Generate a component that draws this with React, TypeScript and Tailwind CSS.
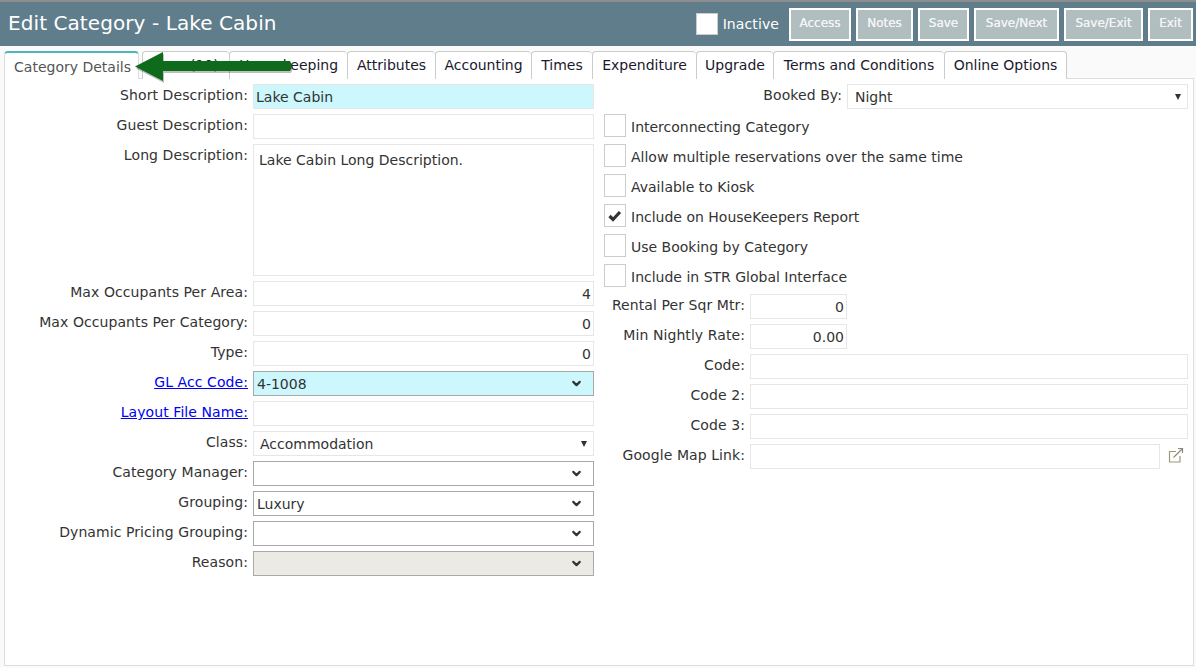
import { ChevronDown } from 'lucide-react';

const tabs = [
  { label: 'Area (10)', width: 'w-[87px]' },
  { label: 'Housekeeping', width: 'w-[118px]' },
  { label: 'Attributes', width: 'w-[88px]' },
  { label: 'Accounting', width: 'w-[96px]' },
  { label: 'Times', width: 'w-[61px]' },
  { label: 'Expenditure', width: 'w-[104px]' },
  { label: 'Upgrade', width: 'w-[77px]' },
  { label: 'Terms and Conditions', width: 'w-[171px]' },
  { label: 'Online Options', width: 'w-[123px]' },
];

const buttons = [
  { label: 'Access', width: 'w-[62px]' },
  { label: 'Notes', width: 'w-[57px]' },
  { label: 'Save', width: 'w-[51px]' },
  { label: 'Save/Next', width: 'w-[85px]' },
  { label: 'Save/Exit', width: 'w-[79px]' },
  { label: 'Exit', width: 'w-[45px]' },
];

const checks = [
  { label: 'Interconnecting Category' },
  { label: 'Allow multiple reservations over the same time' },
  { label: 'Available to Kiosk' },
  { label: 'Include on HouseKeepers Report', checked: true },
  { label: 'Use Booking by Category' },
  { label: 'Include in STR Global Interface' },
];

function Label({ text, link, w = 'w-[243px]' }: { text: string; link?: boolean; w?: string }) {
  return (
    <div className={`${w} shrink-0 text-right h-[22px] leading-[22px] tracking-[0.08px] ${link ? 'text-[#0000ee] underline' : ''}`}>
      {text}
    </div>
  );
}

function Input({ value, right, cyan }: { value?: string; right?: boolean; cyan?: boolean }) {
  return (
    <div
      className={`h-[25px] flex-1 border border-[#e6e6e6] px-[2px] leading-[24px] ${right ? 'text-right' : ''} ${cyan ? 'bg-[#ccf7fd]' : 'bg-white'}`}
    >
      {value}
    </div>
  );
}

function Combo({ value, cyan, disabled }: { value?: string; cyan?: boolean; disabled?: boolean }) {
  return (
    <div
      className={`h-[25px] flex-1 flex items-center justify-between border border-[#a9a9a9] pl-[3px] pr-[10px] ${cyan ? 'bg-[#ccf7fd]' : disabled ? 'bg-[#ebebe4]' : 'bg-white'}`}
    >
      <span className="pt-[1px]">{value}</span>
      <ChevronDown size={13} strokeWidth={4} className="text-[#333]" />
    </div>
  );
}

function NativeSelect({ value, pad = 'pl-[6px]' }: { value: string; pad?: string }) {
  return (
    <div className={`h-[25px] flex-1 flex items-center justify-between border border-[#e6e6e6] bg-white pr-[6px] ${pad}`}>
      <span className="pt-[1px]">{value}</span>
      <svg width="6" height="6" viewBox="0 0 6 6">
        <path d="M0 0H6L3 6Z" fill="#333" />
      </svg>
    </div>
  );
}

function Row({ children }: { children: React.ReactNode }) {
  return <div className="flex gap-[5px] items-start">{children}</div>;
}

export default function App() {
  return (
    <div className="relative w-[1196px] h-[668px] overflow-hidden bg-[#fafafa] text-[14px] text-[#333] font-['Verdana','DejaVu_Sans',sans-serif]">
      <div className="h-[46px] border-t-2 border-[#8e8e8e] bg-[#607d8b] flex items-center pl-[8px] pr-[3px] text-white">
        <h1 className="text-[20px] leading-none tracking-[0.08px] -translate-y-[1px]">Edit Category - Lake Cabin</h1>
        <div className="ml-auto flex items-center gap-[5px]">
          <div className="w-[22px] h-[22px] bg-white border border-[#ccc]" />
          <span className="mr-[5px] tracking-[0.1px]">Inactive</span>
          {buttons.map((b) => (
            <div
              key={b.label}
              className={`${b.width} h-[33px] border-2 border-white bg-[#b0bec0] text-center text-[12px] leading-[27px] text-[#f2f4f4] [text-shadow:0_0_0.6px_#ffffff]`}
            >
              {b.label}
            </div>
          ))}
        </div>
      </div>

      <div className="flex items-end h-[33px] pl-[4px]">
        <div className="w-[135px] h-[28px] bg-white border border-b-0 border-[#ddd] border-t-2 border-t-[#4db6bc] rounded-t-[4px] pl-[2px] text-center leading-[28px] text-[#555] mr-[3px]">
          Category Details
        </div>
        {tabs.map((t) => (
          <div
            key={t.label}
            className={`${t.width} h-[28px] bg-white border-l border-t last:border-r border-[#ccc] rounded-t-[4px] text-center leading-[26px] text-[#1a1a2e]`}
          >
            {t.label}
          </div>
        ))}
      </div>

      <div className="ml-[4px] mr-[2px] -mt-[1px] h-[588px] bg-white border border-[#ddd] pt-[5px] flex">
        <div className="w-[589px] shrink-0 flex flex-col gap-[5px]">
          <Row>
            <Label text="Short Description:" />
            <Input value="Lake Cabin" cyan />
          </Row>
          <Row>
            <Label text="Guest Description:" />
            <Input />
          </Row>
          <Row>
            <Label text="Long Description:" />
            <div className="h-[132px] flex-1 border border-[#e6e6e6] px-[5px] py-[5px] leading-[20px]">
              Lake Cabin Long Description.
            </div>
          </Row>
          <Row>
            <Label text="Max Occupants Per Area:" />
            <Input value="4" right />
          </Row>
          <Row>
            <Label text="Max Occupants Per Category:" />
            <Input value="0" right />
          </Row>
          <Row>
            <Label text="Type:" />
            <Input value="0" right />
          </Row>
          <Row>
            <Label text="GL Acc Code:" link />
            <Combo value="4-1008" cyan />
          </Row>
          <Row>
            <Label text="Layout File Name:" link />
            <Input />
          </Row>
          <Row>
            <Label text="Class:" />
            <NativeSelect value="Accommodation" />
          </Row>
          <Row>
            <Label text="Category Manager:" />
            <Combo />
          </Row>
          <Row>
            <Label text="Grouping:" />
            <Combo value="Luxury" />
          </Row>
          <Row>
            <Label text="Dynamic Pricing Grouping:" />
            <Combo />
          </Row>
          <Row>
            <Label text="Reason:" />
            <Combo disabled />
          </Row>
        </div>

        <div className="flex-1 pl-[10px] pr-[5px] flex flex-col gap-[5px]">
          <Row>
            <Label text="Booked By:" w="w-[238px]" />
            <NativeSelect value="Night" pad="pl-[7px]" />
          </Row>
          <div className="flex flex-col gap-[7px] mb-[2px]">
            {checks.map((c) => (
              <div key={c.label} className="flex items-center gap-[5px] h-[23px]">
                <div className="w-[22px] h-[23px] border border-[#ccc] bg-white flex items-center justify-center">
                  {c.checked && (
                    <svg width="14" height="12" viewBox="0 0 14 12">
                      <path d="M1.5 6 L5 9.5 L12 2" fill="none" stroke="#333" strokeWidth="3.2" />
                    </svg>
                  )}
                </div>
                <span className="pt-[3px] leading-[20px]">{c.label}</span>
              </div>
            ))}
          </div>
          <Row>
            <Label text="Rental Per Sqr Mtr:" w="w-[141px]" />
            <div className="w-[97px] flex">
              <Input value="0" right />
            </div>
          </Row>
          <Row>
            <Label text="Min Nightly Rate:" w="w-[141px]" />
            <div className="w-[97px] flex">
              <Input value="0.00" right />
            </div>
          </Row>
          <Row>
            <Label text="Code:" w="w-[141px]" />
            <Input />
          </Row>
          <Row>
            <Label text="Code 2:" w="w-[141px]" />
            <Input />
          </Row>
          <Row>
            <Label text="Code 3:" w="w-[141px]" />
            <Input />
          </Row>
          <Row>
            <Label text="Google Map Link:" w="w-[141px]" />
            <Input />
            <svg width="16" height="16" viewBox="0 0 16 16" fill="none" className="mt-[3px] ml-[3px] mr-[4px] shrink-0">
              <path d="M8 4.5H1.5V15H12V9" stroke="#9c9a78" strokeWidth="1.2" />
              <path d="M5.5 10.5L14 2M10 1.5H14.5V6" stroke="#8d8a7a" strokeWidth="1.2" />
            </svg>
          </Row>
        </div>
      </div>

      {/* green callout arrow over the tabs */}
      <svg className="absolute left-[132px] top-[50px]" width="164" height="36" viewBox="0 0 164 36">
        <path d="M3 16.5 L31 2 L31 11 L158 11 Q161 16 158 21 L31 21 L31 31 Z" fill="#000" opacity="0.25" transform="translate(1 2)" />
        <path d="M3 16.5 L31 2 L31 11 L158 11 Q161 16 158 21 L31 21 L31 31 Z" fill="#0f6b1c" />
      </svg>
    </div>
  );
}
